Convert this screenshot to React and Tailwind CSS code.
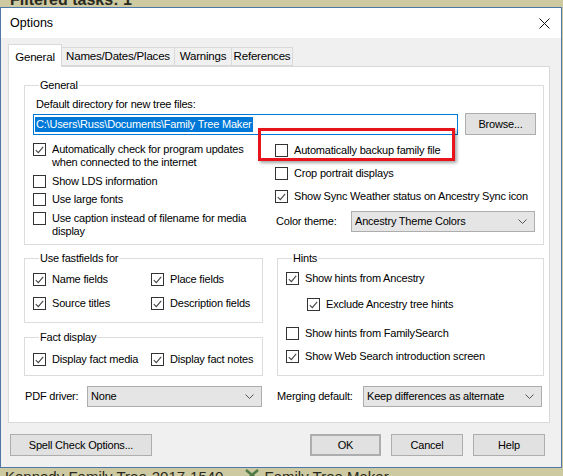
import React from 'react';

function Check({ checked, children, className = '' }) {
  return (
    <div className={`flex items-start gap-[6px] whitespace-nowrap ${className}`}>
      <div className="flex h-[13px] w-[13px] shrink-0 items-center justify-center border border-[#333] bg-white">
        {checked && (
          <svg width="9" height="8" viewBox="0 0 9 8" fill="none">
            <path d="M0.8 4.2 L3.3 6.6 L8.2 0.9" stroke="#444" strokeWidth="1.1" />
          </svg>
        )}
      </div>
      <div className="leading-[13px]">{children}</div>
    </div>
  );
}

function Group({ title, className = '', children }) {
  return (
    <fieldset className={`border border-[#dcdcdc] ${className}`}>
      <legend className="ml-[6px] px-[1px] leading-[14px]">{title}</legend>
      {children}
    </fieldset>
  );
}

function Select({ value, className = '' }) {
  return (
    <div className={`flex h-[21px] items-center justify-between border border-[#adadad] bg-[#e5e5e5] pl-[3px] pr-[7px] ${className}`}>
      <span>{value}</span>
      <svg width="9" height="5" viewBox="0 0 9 5" fill="none">
        <path d="M0.5 0.5 L4.5 4.5 L8.5 0.5" stroke="#555" strokeWidth="1" />
      </svg>
    </div>
  );
}

function Button({ children, className = '' }) {
  return (
    <div className={`flex h-[22px] items-center justify-center border border-[#adadad] bg-[#e1e1e1] ${className}`}>
      {children}
    </div>
  );
}

export default function App() {
  return (
    <div className="relative h-[476px] w-[563px] overflow-hidden bg-[#cdc9a0] text-[11px] tracking-[-0.2px] text-black" style={{ fontFamily: '"Liberation Sans", Arial, sans-serif' }}>
      <div className="h-[7px] overflow-hidden">
        <div className="-mt-[12px] pl-[10px] text-[16px] font-bold tracking-normal text-[#2a2a20]">Filtered tasks: 1</div>
      </div>

      <div className="flex h-[461px] w-[562px] flex-col border border-[#4f77a8] bg-[#f0f0f0]">
        <div className="flex h-[30px] items-center justify-between bg-white pl-[9px] pr-[11px]">
          <span className="pt-[1px] text-[12.5px] tracking-normal">Options</span>
          <svg width="11" height="11" viewBox="0 0 11 11" fill="none">
            <path d="M0.5 0.5 L10.5 10.5 M10.5 0.5 L0.5 10.5" stroke="#111" strokeWidth="1" />
          </svg>
        </div>

        <div className="flex flex-col px-[7px] pt-[6px]">
          <div className="flex items-end text-[11.5px]">
            <div className="z-10 -mb-px flex h-[23px] w-[54px] items-start justify-center border border-b-0 border-[#d9d9d9] bg-white pt-[4px]">General</div>
            <div className="flex h-[19px] w-[113px] items-center justify-center border border-l-0 border-[#d9d9d9] bg-[#f0f0f0]">Names/Dates/Places</div>
            <div className="flex h-[19px] w-[57px] items-center justify-center border border-l-0 border-[#d9d9d9] bg-[#f0f0f0]">Warnings</div>
            <div className="flex h-[19px] w-[61px] items-center justify-center border border-l-0 border-[#d9d9d9] bg-[#f0f0f0]">References</div>
          </div>

          <div className="relative h-[357px] w-[542px] border border-[#d9d9d9] bg-white pl-[15px] pr-[5px] pt-[11px]">
            <Group title="General" className="h-[167px] w-[520px] pl-[8px] pr-[6px]">
              <div className="mt-[5px] pl-[3px] leading-[14px]">Default directory for new tree files:</div>
              <div className="mt-[2px] flex items-center">
                <div className="flex h-[21px] w-[425px] items-center border border-[#0078d7] bg-white pl-[1px]">
                  <span className="bg-[#0078d7] px-[1px] leading-[15px] text-white">C:\Users\Russ\Documents\Family Tree Maker</span>
                </div>
                <Button className="ml-[7px] w-[71px]">Browse...</Button>
              </div>
              <div className="mt-[8px] flex">
                <div className="flex w-[242px] flex-col">
                  <Check checked>Automatically check for program updates<br />when connected to the internet</Check>
                  <Check className="mt-[6px]">Show LDS information</Check>
                  <Check className="mt-[5px]">Use large fonts</Check>
                  <Check className="mt-[6px]">Use caption instead of filename for media<br />display</Check>
                </div>
                <div className="flex flex-1 flex-col pt-[1px]">
                  <Check>Automatically backup family file</Check>
                  <Check className="mt-[10px]">Crop portrait displays</Check>
                  <Check className="mt-[10px]" checked>Show Sync Weather status on Ancestry Sync icon</Check>
                  <div className="mt-[8px] flex items-center">
                    <span className="w-[76px] pl-[1px]">Color theme:</span>
                    <Select value="Ancestry Theme Colors" className="w-[184px]" />
                  </div>
                </div>
              </div>
            </Group>

            <div className="mt-[6px] flex gap-[14px]">
              <div className="flex w-[239px] flex-col">
                <Group title="Use fastfields for" className="h-[72px] pl-[8px]">
                  <div className="mt-[8px] grid grid-cols-[118px_1fr] gap-y-[11px]">
                    <Check checked>Name fields</Check>
                    <Check checked>Place fields</Check>
                    <Check checked>Source titles</Check>
                    <Check checked>Description fields</Check>
                  </div>
                </Group>
                <Group title="Fact display" className="mt-[7px] h-[46px] pl-[8px]">
                  <div className="mt-[9px] grid grid-cols-[118px_1fr]">
                    <Check checked>Display fact media</Check>
                    <Check checked>Display fact notes</Check>
                  </div>
                </Group>
              </div>
              <Group title="Hints" className="h-[125px] w-[267px] pl-[8px]">
                <Check className="mt-[7px]" checked>Show hints from Ancestry</Check>
                <Check className="ml-[21px] mt-[13px]" checked>Exclude Ancestry tree hints</Check>
                <Check className="mt-[16px]">Show hints from FamilySearch</Check>
                <Check className="mt-[10px]" checked>Show Web Search introduction screen</Check>
              </Group>
            </div>

            <div className="mt-[10px] flex items-center">
              <span className="w-[63px] pl-[1px]">PDF driver:</span>
              <Select value="None" className="w-[175px]" />
              <span className="ml-[15px] w-[86px]">Merging default:</span>
              <Select value="Keep differences as alternate" className="w-[179px]" />
            </div>

            <div className="pointer-events-none absolute left-[249px] top-[61px] h-[33px] w-[197px] border-[3px] border-[#e8141b] shadow-[2px_2px_3px_rgba(0,0,0,0.35)]" />
          </div>

          <div className="mt-[11px] flex items-center">
            <Button className="ml-[2px] w-[142px]">Spell Check Options...</Button>
            <Button className="ml-[158px] w-[71px] border-2 border-[#0078d7]">OK</Button>
            <Button className="ml-[10px] w-[72px]">Cancel</Button>
            <Button className="ml-[10px] w-[72px]">Help</Button>
          </div>
        </div>
      </div>

      <div className="flex h-[8px] items-start overflow-hidden text-[15px] leading-[18px] tracking-normal text-[#2a2a20]">
        <span className="pl-[5px]">Kennedy Family Tree-2017-1540</span>
        <svg className="ml-[22px] mt-[1px]" width="14" height="12" viewBox="0 0 14 12" fill="none">
          <path d="M1 1 L13 11 M13 1 L1 11" stroke="#4f7a45" strokeWidth="2.5" />
        </svg>
        <span className="ml-[5px]">Family Tree Maker</span>
      </div>
    </div>
  );
}
